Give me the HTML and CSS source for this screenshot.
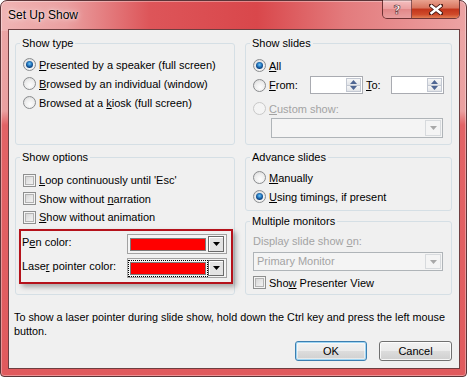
FILE: index.html
```html
<!DOCTYPE html>
<html lang="en">
<head>
  <meta charset="UTF-8" />
  <title>Set Up Show</title>
  <link rel="stylesheet" href="styles.css">
</head>
<body>

  <div class="window">
    <div class="titlebar">
      <span class="title">Set Up Show</span>
      <div class="caption">
        <span class="cap help">?</span>
        <span class="cap close">
          <svg width="14" height="11" viewBox="0 0 14 11"><path d="M2 1.5 L12 9.5 M12 1.5 L2 9.5" stroke="#4a1a14" stroke-width="4.2" stroke-linecap="square"/><path d="M2.5 2 L11.5 9 M11.5 2 L2.5 9" stroke="#fff" stroke-width="2.4" stroke-linecap="square"/></svg>
        </span>
      </div>
    </div>

    <div class="client">
      <div class="groups">
        <div class="col">
          <fieldset class="group show-type">
            <legend>Show type</legend>
            <div class="body">
              <div class="row"><span class="radio checked"></span><span><u>P</u>resented by a speaker (full screen)</span></div>
              <div class="row"><span class="radio"></span><span><u>B</u>rowsed by an individual (window)</span></div>
              <div class="row"><span class="radio"></span><span>Browsed at a <u>k</u>iosk (full screen)</span></div>
            </div>
          </fieldset>

          <fieldset class="group show-options">
            <legend>Show options</legend>
            <div class="body">
              <div class="row"><span class="check"></span><span><u>L</u>oop continuously until 'Esc'</span></div>
              <div class="row"><span class="check"></span><span>Show without <u>n</u>arration</span></div>
              <div class="row"><span class="check"></span><span><u>S</u>how without animation</span></div>

              <div class="highlight">
                <span class="pick-label">P<u>e</u>n color:</span>
                <div class="color-pick">
                  <span class="swatch"></span>
                  <span class="drop-btn"><svg width="7" height="4" viewBox="0 0 7 4"><path d="M0 0 H7 L3.5 4 Z" fill="#000"/></svg></span>
                </div>
                <span class="pick-label">Lase<u>r</u> pointer color:</span>
                <div class="color-pick">
                  <span class="swatch focused"></span>
                  <span class="drop-btn"><svg width="7" height="4" viewBox="0 0 7 4"><path d="M0 0 H7 L3.5 4 Z" fill="#000"/></svg></span>
                </div>
              </div>
            </div>
          </fieldset>
        </div>

        <div class="col">
          <fieldset class="group show-slides">
            <legend>Show slides</legend>
            <div class="body">
              <div class="row"><span class="radio checked"></span><span><u>A</u>ll</span></div>
              <div class="row from-row">
                <span class="radio"></span>
                <span class="from-label"><u>F</u>rom:</span>
                <div class="spin">
                  <div class="spin-btns">
                    <span class="spin-btn"><svg width="7" height="4" viewBox="0 0 7 4"><path d="M0 4 H7 L3.5 0 Z" fill="#4e6592"/></svg></span>
                    <span class="spin-btn"><svg width="7" height="4" viewBox="0 0 7 4"><path d="M0 0 H7 L3.5 4 Z" fill="#4e6592"/></svg></span>
                  </div>
                </div>
                <span class="to-label"><u>T</u>o:</span>
                <div class="spin">
                  <div class="spin-btns">
                    <span class="spin-btn"><svg width="7" height="4" viewBox="0 0 7 4"><path d="M0 4 H7 L3.5 0 Z" fill="#4e6592"/></svg></span>
                    <span class="spin-btn"><svg width="7" height="4" viewBox="0 0 7 4"><path d="M0 0 H7 L3.5 4 Z" fill="#4e6592"/></svg></span>
                  </div>
                </div>
              </div>
              <div class="row custom-row disabled"><span class="radio"></span><span><u>C</u>ustom show:</span></div>
              <div class="combo disabled custom-combo">
                <span class="combo-text"></span>
                <span class="combo-btn"><svg width="7" height="4" viewBox="0 0 7 4"><path d="M0 0 H7 L3.5 4 Z" fill="#a8a8a8"/></svg></span>
              </div>
            </div>
          </fieldset>

          <fieldset class="group advance">
            <legend>Advance slides</legend>
            <div class="body">
              <div class="row"><span class="radio"></span><span><u>M</u>anually</span></div>
              <div class="row"><span class="radio checked"></span><span><u>U</u>sing timings, if present</span></div>
            </div>
          </fieldset>

          <fieldset class="group monitors">
            <legend>Multiple monitors</legend>
            <div class="body">
              <div class="display-label disabled">Display slide show <u>o</u>n:</div>
              <div class="combo disabled monitor-combo">
                <span class="combo-text">Primary Monitor</span>
                <span class="combo-btn"><svg width="7" height="4" viewBox="0 0 7 4"><path d="M0 0 H7 L3.5 4 Z" fill="#a8a8a8"/></svg></span>
              </div>
              <div class="row presenter-row"><span class="check"></span><span>Sho<u>w</u> Presenter View</span></div>
            </div>
          </fieldset>
        </div>
      </div>

      <p class="hint">To show a laser pointer during slide show, hold down the Ctrl key and press the left mouse button.</p>

      <div class="buttons">
        <button class="btn default">OK</button>
        <button class="btn">Cancel</button>
      </div>
    </div>
  </div>

</body>
</html>
```

FILE: styles.css
```css
body {
  margin: 0;
  background: #fff;
  font-family: "Liberation Sans", Arial, sans-serif;
  font-size: 11px;
  color: #000;
}

.window {
  width: 467px;
  height: 377px;
  box-sizing: border-box;
  border: 1px solid #5b3437;
  border-radius: 7px 7px 4px 4px;
  padding: 0 6px 7px 7px;
  display: flex;
  flex-direction: column;
  background:
    linear-gradient(to right, #f0b4b4 0%, #eaa0a1 14%, #dd5559 32%, #d9474b 55%, #e37b7d 74%, #eca3a3 100%) top / 100% 30px no-repeat,
    linear-gradient(to bottom, #eca6a6 0, #eaa0a0 110px, #e26366 124px, #e05a5d 100%);
  box-shadow: inset 0 0 0 1px rgba(255, 255, 255, 0.35);
}

/* title bar */
.titlebar {
  height: 28px;
  display: flex;
  justify-content: space-between;
  align-items: flex-start;
}

.title {
  font-size: 12px;
  line-height: 16px;
  padding-top: 6px;
  text-shadow: 0 0 6px rgba(255, 255, 255, 0.9), 0 0 2px rgba(255, 255, 255, 0.8);
}

.caption {
  display: flex;
  margin-top: -1px;
  height: 19px;
  box-sizing: border-box;
  border: 1px solid rgba(70, 20, 22, 0.75);
  border-top: none;
  border-radius: 0 0 5px 5px;
  overflow: hidden;
}

.cap {
  display: flex;
  align-items: center;
  justify-content: center;
  height: 100%;
}

.cap.help {
  width: 28px;
  border-right: 1px solid rgba(70, 20, 22, 0.6);
  background: linear-gradient(to bottom, rgba(255, 235, 235, 0.55) 0%, rgba(240, 180, 180, 0.45) 50%, rgba(220, 130, 130, 0.5) 51%, rgba(235, 170, 170, 0.6) 100%);
  color: #fff;
  font-family: "DejaVu Sans", sans-serif;
  font-weight: bold;
  font-size: 13px;
  -webkit-text-stroke: 0.6px #5a2a2a;
}

.cap.close {
  width: 47px;
  background: linear-gradient(to bottom, #e9a28f 0%, #d8735c 45%, #c2341b 50%, #cf4a2a 80%, #e27f56 100%);
}

/* client area */
.client {
  flex: 1;
  background: #f0f0f0;
  border: 1px solid #6e3e40;
  padding: 5px 7px 0 6px;
  display: flex;
  flex-direction: column;
}

.groups {
  display: grid;
  grid-template-columns: 220px 207px;
  column-gap: 10px;
}

.col {
  display: flex;
  flex-direction: column;
}

.group {
  margin: 0;
  padding: 0;
  border: 1px solid #d5dfe5;
  border-radius: 3px;
  min-width: 0;
}

.group legend {
  margin-left: 4px;
  padding: 0 2px;
  line-height: 16px;
}

.row {
  display: flex;
  align-items: center;
  gap: 3px;
  height: 19px;
  white-space: nowrap;
}

.disabled {
  color: #a3a3a3;
}

/* radios and checkboxes */
.radio {
  flex: none;
  position: relative;
  width: 13px;
  height: 13px;
  box-sizing: border-box;
  border-radius: 50%;
  border: 1px solid #8a8c8e;
  background: radial-gradient(circle at 55% 65%, #fdfdfd 0, #ececec 55%, #cfcfcf 100%);
}

.radio.checked::after {
  content: "";
  position: absolute;
  inset: 2px;
  border-radius: 50%;
  background: radial-gradient(circle at 50% 40%, #78c9f5 0, #2a7fc6 35%, #0c3f7c 68%, #4d9fd6 100%);
}

.disabled .radio {
  border-color: #c8c8c8;
  background: #f4f4f4;
}

.check {
  flex: none;
  width: 13px;
  height: 13px;
  box-sizing: border-box;
  border: 1px solid #8e8f8f;
  background: linear-gradient(135deg, #cdcdcd 0%, #e6e6e6 50%, #f7f7f7 100%);
  box-shadow: inset 0 0 0 1px #f4f4f4, inset 0 0 0 2px #b3b3b3;
}

/* show type */
.show-type .body {
  height: 93px;
  box-sizing: border-box;
  padding: 4px 0 0 7px;
}

/* show options */
.show-options {
  margin-top: 4px;
}

.show-options .body {
  height: 129px;
  box-sizing: border-box;
  padding: 6px 1px 0 3px;
}

.show-options .row {
  height: 18.5px;
  padding-left: 4px;
}

.highlight {
  margin-top: 2.5px;
  border: 2px solid #b5121b;
  padding: 3px 4px 4px 1px;
  display: grid;
  grid-template-columns: 1fr auto;
  align-items: center;
  row-gap: 4px;
  box-shadow: 3px 3px 5px rgba(0, 0, 0, 0.3);
}

.pick-label {
  padding-bottom: 4px;
}

.color-pick {
  width: 100px;
  height: 20px;
  box-sizing: border-box;
  border: 1px solid #a2a2a2;
  background: #f4f4f4;
  display: flex;
  align-items: center;
  padding: 0 2px 0 2px;
}

.swatch {
  width: 76px;
  height: 13px;
  box-sizing: border-box;
  border: 1px solid #7c7c7c;
  background: #ff0000;
}

.swatch.focused {
  outline: 1px dotted #000;
  outline-offset: 1px;
}

.drop-btn {
  margin-left: auto;
  width: 16px;
  height: 16px;
  box-sizing: border-box;
  border: 1px solid #6a6a6a;
  background: #e3e3e3;
  box-shadow: inset 1px 1px 0 #fff;
  display: flex;
  align-items: center;
  justify-content: center;
}

/* show slides */
.show-slides .body {
  height: 93px;
  box-sizing: border-box;
  padding: 5px 0 0 7px;
}

.from-row {
  height: 20px;
  gap: 0;
}

.from-label {
  margin-left: 3px;
  width: 41px;
}

.to-label {
  margin-left: 3px;
  width: 25px;
}

.spin {
  width: 53px;
  height: 18px;
  box-sizing: border-box;
  border: 1px solid #a9abb1;
  background: #fff;
  display: flex;
  justify-content: flex-end;
  padding: 1px;
}

.spin-btns {
  width: 15px;
  display: flex;
  flex-direction: column;
}

.spin-btn {
  flex: 1;
  display: flex;
  align-items: center;
  justify-content: center;
  border: 1px solid #c3c8d2;
  background: linear-gradient(to bottom, #f7f7f7, #e2e4e8);
}

.spin-btn + .spin-btn {
  border-top: none;
}

.custom-row {
  margin-top: 4px;
}

.combo {
  height: 20px;
  box-sizing: border-box;
  border: 1px solid #afb4b8;
  background: #f4f4f4;
  display: flex;
  align-items: stretch;
  justify-content: space-between;
}

.custom-combo {
  width: 172px;
  margin-left: 18px;
}

.combo-text {
  padding-left: 3px;
  line-height: 18px;
}

.combo-btn {
  width: 16px;
  margin: 1px;
  box-sizing: border-box;
  border: 1px solid #d7dadd;
  display: flex;
  align-items: center;
  justify-content: center;
}

/* advance slides */
.advance {
  margin-top: 4px;
}

.advance .body {
  height: 45px;
  box-sizing: border-box;
  padding: 3px 0 0 7px;
}

/* multiple monitors */
.monitors {
  margin-top: 2px;
}

.monitors .body {
  height: 65px;
  box-sizing: border-box;
  padding: 3px 0 0 7px;
}

.display-label {
  line-height: 18px;
}

.monitor-combo {
  width: 190px;
  height: 19px;
  margin-top: 2px;
  color: #a3a3a3;
}

.monitor-combo .combo-text {
  line-height: 17px;
}

.presenter-row {
  margin-top: 2px;
}

/* footer */
.hint {
  margin: 15px -6px 0 -1px;
  font-size: 10.8px;
  line-height: 14px;
}

.buttons {
  display: flex;
  justify-content: flex-end;
  gap: 12px;
  margin-top: 3px;
}

.btn {
  width: 73px;
  height: 20px;
  padding: 0;
  font-family: inherit;
  font-size: 11px;
  color: #000;
  border: 1px solid #707070;
  border-radius: 3px;
  background: linear-gradient(to bottom, #f2f2f2 0%, #ebebeb 48%, #dddddd 50%, #cfcfcf 100%);
  box-shadow: inset 0 0 0 1px rgba(255, 255, 255, 0.8);
}

.btn.default {
  width: 72px;
  border-color: #3c7fb1;
  box-shadow: inset 0 0 0 1px #9fd5f3, inset 0 0 0 2px rgba(255, 255, 255, 0.5);
}
```
